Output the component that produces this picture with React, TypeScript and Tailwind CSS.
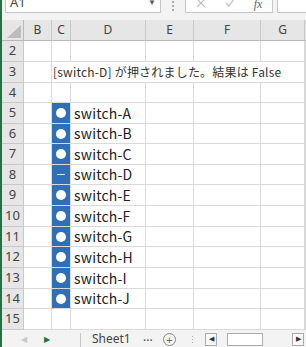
import React from 'react';

const COLS = [
  { name: 'B', w: 'w-[28px]' },
  { name: 'C', w: 'w-[19px]' },
  { name: 'D', w: 'w-[75px]' },
  { name: 'E', w: 'w-[48px]' },
  { name: 'F', w: 'w-[67px]' },
  { name: 'G', w: 'w-[44px]' },
];

type Row = { n: number; h: string; sw?: string; pressed?: boolean; msg?: boolean };

const ROWS: Row[] = [
  { n: 2, h: 'h-[21px]' },
  { n: 3, h: 'h-[21px]', msg: true },
  { n: 4, h: 'h-[20px]' },
  { n: 5, h: 'h-[21px]', sw: 'switch-A' },
  { n: 6, h: 'h-[20px]', sw: 'switch-B' },
  { n: 7, h: 'h-[21px]', sw: 'switch-C' },
  { n: 8, h: 'h-[20px]', sw: 'switch-D', pressed: true },
  { n: 9, h: 'h-[21px]', sw: 'switch-E' },
  { n: 10, h: 'h-[21px]', sw: 'switch-F' },
  { n: 11, h: 'h-[20px]', sw: 'switch-G' },
  { n: 12, h: 'h-[21px]', sw: 'switch-H' },
  { n: 13, h: 'h-[21px]', sw: 'switch-I' },
  { n: 14, h: 'h-[20px]', sw: 'switch-J' },
  { n: 15, h: 'h-[21px]' },
];

const cell = 'border-r border-b border-[#dadada] bg-white';
const jp = { fontFamily: '"Noto Sans CJK JP", "Noto Sans", sans-serif' };
const ui = { fontFamily: '"Noto Sans", "Liberation Sans", sans-serif' };

function SheetRow({ row }: { row: Row }) {
  return (
    <div className={`flex ${row.h}`}>
      <div
        className="w-[22px] shrink-0 bg-[#e6e6e6] border-r border-b border-[#c8c8c8] flex items-center justify-center text-[13px] text-[#444]"
        style={ui}
      >
        {row.n}
      </div>
      <div className={`w-[28px] shrink-0 ${cell}`} />
      {row.msg ? (
        <div
          className={`flex-1 ${cell} flex items-center pl-[1px] whitespace-nowrap text-[12px] tracking-[0.2px] text-[#333]`}
          style={jp}
        >
          [switch-D] が押されました。結果は False
        </div>
      ) : (
        <>
          <div
            className={`w-[19px] shrink-0 border-r border-b border-[#dadada] flex items-center justify-center ${row.sw ? 'bg-[#2e6fb7]' : 'bg-white'}`}
          >
            {row.sw && !row.pressed && <div className="w-[10px] h-[10px] rounded-full bg-white" />}
            {row.pressed && <div className="w-[8px] h-[1px] bg-[#dbe6f4]" />}
          </div>
          <div
            className={`w-[75px] shrink-0 ${cell} flex items-center pl-[3px] text-[14px] tracking-[0.2px] text-[#222]`}
            style={jp}
          >
            {row.sw}
          </div>
          <div className={`w-[48px] shrink-0 ${cell}`} />
          <div className={`w-[67px] shrink-0 ${cell}`} />
          <div className={`w-[44px] shrink-0 ${cell}`} />
        </>
      )}
    </div>
  );
}

export default function App() {
  return (
    <div className="w-[306px] h-[347px] overflow-hidden bg-[#f3f3f3] flex select-none">
      {/* window edge */}
      <div className="w-[2px] shrink-0 bg-[#217346]" />

      <div className="flex-1 flex flex-col min-w-0">
        {/* formula bar, cut off at the top */}
        <div className="h-[20px] shrink-0 flex items-start text-[#999]" style={ui}>
          <div className="ml-[3px] w-[156px] h-[13px] bg-white border border-t-0 border-[#c6c6c6] flex items-end justify-between px-[4px] overflow-hidden">
            <span className="text-[13px] leading-none mb-[3px] text-[#444]">A1</span>
            <span className="text-[8px] leading-none mb-[6px] text-[#555]">▼</span>
          </div>
          <div className="w-[24px] h-[12px] flex flex-col items-center justify-start gap-[2px] pt-[1px]">
            <div className="w-[2px] h-[2px] bg-[#aaa]" />
            <div className="w-[2px] h-[2px] bg-[#aaa]" />
            <div className="w-[2px] h-[2px] bg-[#aaa]" />
          </div>
          <div className="w-[88px] h-[13px] bg-white border border-t-0 border-[#c6c6c6] flex items-start justify-around overflow-hidden">
            <svg width="10" height="10" viewBox="0 0 10 10" className="-mt-[2px]">
              <path d="M1 9 L9 1 M1 1 L9 9" stroke="#c0c0c0" strokeWidth="1.2" fill="none" />
            </svg>
            <svg width="10" height="10" viewBox="0 0 10 10" className="-mt-[2px]">
              <path d="M1 5 L4 8 L9 1" stroke="#c0c0c0" strokeWidth="1.2" fill="none" />
            </svg>
            <span
              className="italic text-[12px] leading-none -mt-[2px] text-[#666]"
              style={{ fontFamily: '"Liberation Serif", serif' }}
            >
              fx
            </span>
          </div>
          <div className="ml-[4px] flex-1 h-[13px] bg-white border border-t-0 border-r-0 border-[#c6c6c6]" />
        </div>

        {/* column headers */}
        <div className="h-[21px] shrink-0 flex text-[12px] text-[#444]" style={ui}>
          <div className="w-[22px] shrink-0 bg-[#e6e6e6] border-r border-b border-[#b8b8b8] relative">
            <svg width="14" height="13" viewBox="0 0 14 13" className="absolute right-[2px] bottom-[2px]">
              <polygon points="14,0 14,13 0,13" fill="#bcbcbc" />
            </svg>
          </div>
          {COLS.map((c) => (
            <div
              key={c.name}
              className={`${c.w} shrink-0 bg-[#e6e6e6] border-r border-b border-[#c8c8c8] border-b-[#b8b8b8] flex items-center justify-center`}
            >
              {c.name}
            </div>
          ))}
          <div className="flex-1 bg-[#e6e6e6] border-b border-[#b8b8b8]" />
        </div>

        {/* grid */}
        <div className="flex">
          <div className="flex flex-col">
            {ROWS.map((r) => (
              <SheetRow key={r.n} row={r} />
            ))}
          </div>
          <div className="flex-1 bg-[#d6d6d6]" />
        </div>

        {/* sheet tabs + horizontal scroll */}
        <div className="flex-1 flex items-center text-[#444]" style={ui}>
          <span className="ml-[17px] w-[10px] text-center text-[8px] text-[#c8c8c8]">◀</span>
          <span className="ml-[13px] w-[10px] text-center text-[8px] text-[#217346]">▶</span>
          <div className="ml-[28px] w-px h-[15px] bg-[#c6c6c6] self-end" />
          <span className="ml-[11px] w-[40px] text-[12px] whitespace-nowrap">Sheet1</span>
          <span className="ml-[11px] w-[12px] text-[12px] leading-none -mt-[4px] text-[#444]">...</span>
          <div className="ml-[8px] w-[13px] h-[13px] shrink-0 rounded-full border border-[#888] flex items-center justify-center text-[11px] leading-none text-[#666]">
            +
          </div>
          <div className="ml-[15px] w-[2px] flex flex-col items-center gap-[2px]">
            <div className="w-[1px] h-[1px] bg-[#aaa]" />
            <div className="w-[1px] h-[1px] bg-[#aaa]" />
            <div className="w-[1px] h-[1px] bg-[#aaa]" />
          </div>
          <div className="ml-[12px] w-[12px] h-[13px] shrink-0 border border-[#ababab] bg-[#f8f8f8] flex items-center justify-center text-[7px] text-[#333]">
            ◀
          </div>
          <div className="ml-[10px] w-[36px] h-[13px] shrink-0 border border-[#ababab] bg-white" />
          <div className="ml-[29px] w-[12px] h-[13px] shrink-0 border border-[#ababab] bg-[#f8f8f8] flex items-center justify-center text-[7px] text-[#333]">
            ▶
          </div>
        </div>
      </div>
    </div>
  );
}
